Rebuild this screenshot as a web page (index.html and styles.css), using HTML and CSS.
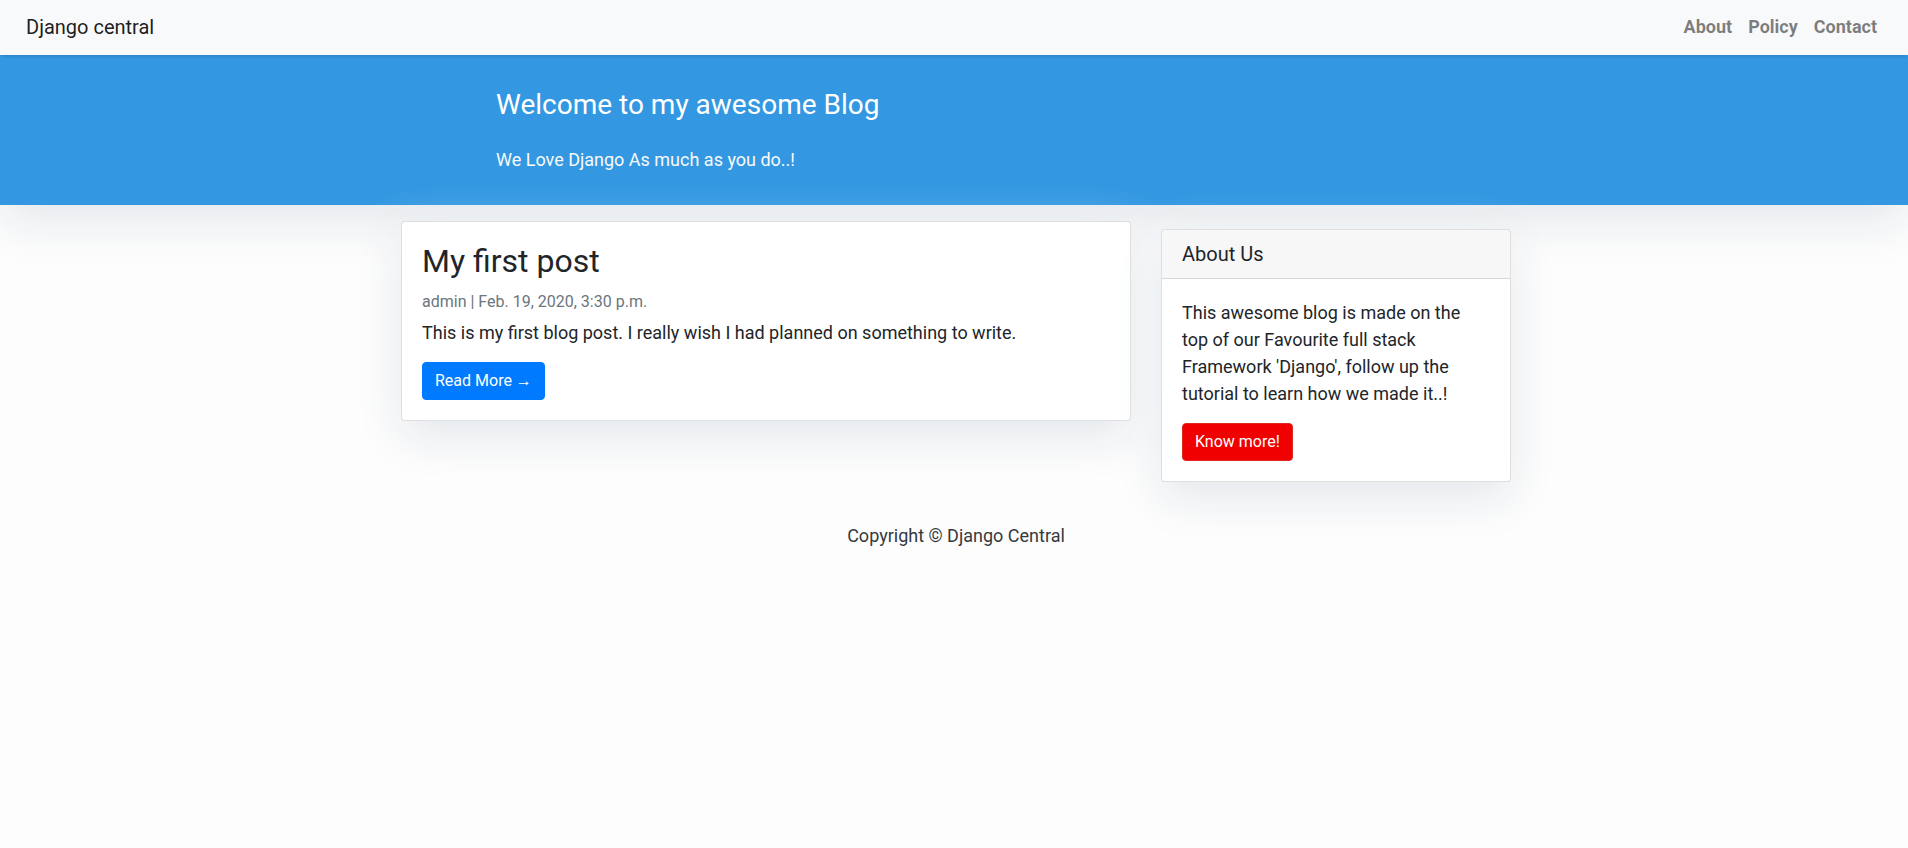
FILE: index.html
```html
<!DOCTYPE html>
<html lang="en">
<head>
<meta charset="utf-8">
<title>Django central</title>
<link rel="stylesheet" href="styles.css">
</head>
<body>
<nav class="navbar">
  <a class="brand" href="#">Django central</a>
  <ul class="nav-links">
    <li><a href="#">About</a></li>
    <li><a href="#">Policy</a></li>
    <li><a href="#">Contact</a></li>
  </ul>
</nav>
<header class="masthead">
  <div class="container">
    <div class="masthead-inner">
      <h3 class="site-heading">Welcome to my awesome Blog</h3>
      <p class="tagline">We Love Django As much as you do..!</p>
    </div>
  </div>
</header>
<main class="container content">
  <div class="posts">
    <article class="card">
      <div class="card-body">
        <h2 class="card-title">My first post</h2>
        <p class="post-meta">admin | Feb. 19, 2020, 3:30 p.m.</p>
        <p class="card-text">This is my first blog post. I really wish I had planned on something to write.</p>
        <a class="btn btn-primary" href="#">Read More &rarr;</a>
      </div>
    </article>
  </div>
  <aside class="sidebar">
    <div class="card side-card">
      <h5 class="card-header">About Us</h5>
      <div class="card-body">
        <p class="card-text">This awesome blog is made on the top of our Favourite full stack Framework 'Django', follow up the tutorial to learn how we made it..!</p>
        <a class="btn btn-danger" href="#">Know more!</a>
      </div>
    </div>
  </aside>
</main>
<footer class="footer">
  <p>Copyright &copy; Django Central</p>
</footer>
</body>
</html>
```

FILE: styles.css
```css
* { box-sizing: border-box; }

body {
  margin: 0;
  font-family: Roboto, "Liberation Sans", sans-serif;
  font-size: 18px;
  line-height: 1.5;
  color: #212529;
  background-color: #fdfdfd;
}

.navbar {
  position: relative;
  z-index: 1;
  display: flex;
  align-items: center;
  justify-content: space-between;
  height: 55px;
  padding: 0 23px 2px 26px;
  background-color: #f8f9fa;
  box-shadow: 0 4px 2px -2px rgba(0, 0, 0, 0.1);
}

.brand {
  font-size: 20px;
  line-height: 30px;
  color: rgba(0, 0, 0, 0.9);
  text-decoration: none;
}

.nav-links {
  display: flex;
  list-style: none;
  margin: 0;
  padding: 0;
}

.nav-links a {
  display: block;
  padding: 8px;
  font-weight: 700;
  line-height: 27px;
  color: rgba(0, 0, 0, 0.5);
  text-decoration: none;
}

.masthead {
  background: #3398E1;
  padding: 17px 0 16px;
  box-shadow: 0 16px 48px #E3E7EB;
}

.container {
  width: 1140px;
  margin-left: calc(50% - 568px);
}

.masthead-inner {
  width: 950px;
  margin: 0 auto;
  padding: 0 15px;
}

.site-heading {
  margin: 16px 0 24px;
  font-size: 28px;
  font-weight: 400;
  line-height: 1.2;
  color: #fff;
}

.tagline {
  margin: 0 0 16px;
  color: #f8f9fa;
}

.content {
  display: flex;
  align-items: flex-start;
}

.posts {
  width: 760px;
  padding: 16px 15px 0;
}

.sidebar {
  width: 380px;
  padding: 0 15px;
}

.card {
  background: #fff;
  border: 1px solid rgba(0, 0, 0, 0.125);
  border-radius: 4px;
  box-shadow: 0 16px 48px #E3E7EB;
  margin-bottom: 24px;
}

.side-card {
  margin-top: 24px;
}

.card-body {
  padding: 20px;
}

.card-title {
  margin: 0 0 12px;
  font-size: 32px;
  font-weight: 400;
  line-height: 1.2;
  color: #212529;
}

.post-meta {
  margin: 0 0 8px;
  font-size: 16px;
  line-height: 1.2;
  color: #6c757d;
}

.card-text {
  margin: 0 0 16px;
}

.card-header {
  margin: 0;
  padding: 12px 20px;
  font-size: 20px;
  font-weight: 400;
  line-height: 1.2;
  background-color: rgba(0, 0, 0, 0.03);
  border-bottom: 1px solid rgba(0, 0, 0, 0.125);
  border-radius: 3px 3px 0 0;
}

.btn {
  display: inline-block;
  padding: 6px 12px;
  font-size: 16px;
  line-height: 24px;
  border: 1px solid transparent;
  border-radius: 4px;
  color: #fff;
  text-decoration: none;
}

.btn-primary {
  background-color: #007bff;
  border-color: #007bff;
}

.btn-danger {
  background-color: #f00000;
  border-color: #dc281e;
}

.footer {
  padding: 16px 0 16px 4px;
  text-align: center;
}

.footer p {
  margin: 0;
  color: #343a40;
}
```
